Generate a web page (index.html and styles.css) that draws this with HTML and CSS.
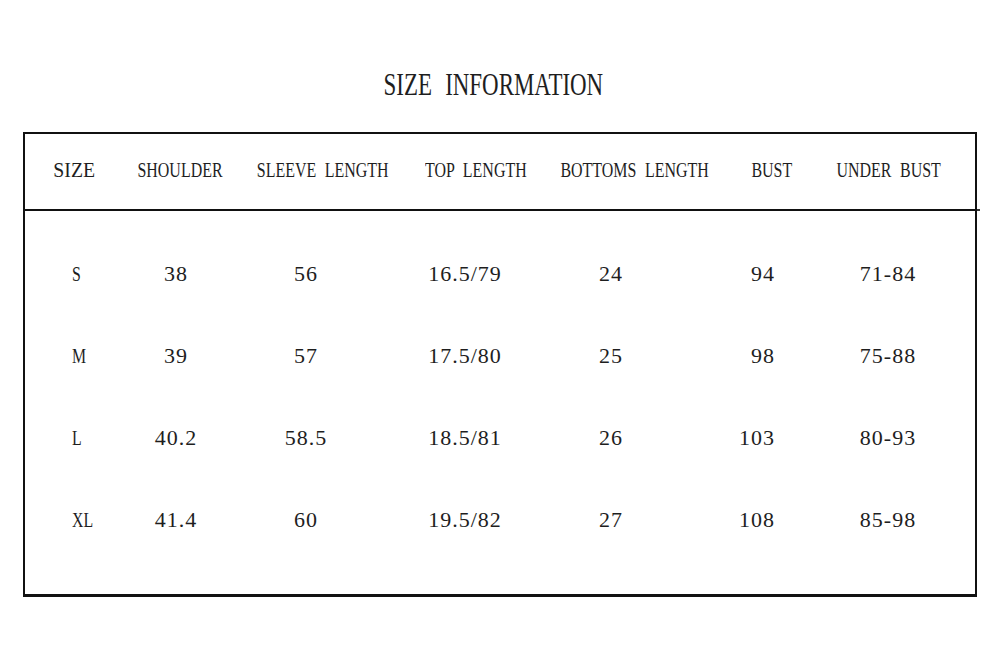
FILE: index.html
```html
<!DOCTYPE html>
<html lang="en">
<head>
<meta charset="utf-8">
<title>Size Information</title>
<link rel="stylesheet" href="styles.css">
</head>
<body>
<main class="sheet">
  <h1 class="title"><span class="squeeze">SIZE INFORMATION</span></h1>
  <section class="chart">
    <div class="head">
      <div class="hcell"><span class="squeeze loose">SIZE</span></div>
      <div class="hcell"><span class="squeeze">SHOULDER</span></div>
      <div class="hcell"><span class="squeeze">SLEEVE LENGTH</span></div>
      <div class="hcell"><span class="squeeze">TOP LENGTH</span></div>
      <div class="hcell"><span class="squeeze">BOTTOMS LENGTH</span></div>
      <div class="hcell"><span class="squeeze">BUST</span></div>
      <div class="hcell"><span class="squeeze">UNDER BUST</span></div>
    </div>
    <div class="body">
      <div class="row">
        <div class="cell size"><span class="letter">S</span></div>
        <div class="cell">38</div>
        <div class="cell">56</div>
        <div class="cell">16.5/79</div>
        <div class="cell">24</div>
        <div class="cell bust">94</div>
        <div class="cell">71-84</div>
      </div>
      <div class="row">
        <div class="cell size"><span class="letter">M</span></div>
        <div class="cell">39</div>
        <div class="cell">57</div>
        <div class="cell">17.5/80</div>
        <div class="cell">25</div>
        <div class="cell bust">98</div>
        <div class="cell">75-88</div>
      </div>
      <div class="row">
        <div class="cell size"><span class="letter">L</span></div>
        <div class="cell">40.2</div>
        <div class="cell">58.5</div>
        <div class="cell">18.5/81</div>
        <div class="cell">26</div>
        <div class="cell bust">103</div>
        <div class="cell">80-93</div>
      </div>
      <div class="row">
        <div class="cell size"><span class="letter">XL</span></div>
        <div class="cell">41.4</div>
        <div class="cell">60</div>
        <div class="cell">19.5/82</div>
        <div class="cell">27</div>
        <div class="cell bust">108</div>
        <div class="cell">85-98</div>
      </div>
    </div>
  </section>
</main>
</body>
</html>
```

FILE: styles.css
```css
html, body {
  margin: 0;
  padding: 0;
  background: #ffffff;
}

body {
  font-family: "Liberation Serif", "Times New Roman", serif;
  color: #1e1e1e;
}

.sheet {
  padding: 68px 0 0 23px;
  width: 954px;
}

.title {
  margin: 0;
  padding-right: 14px;
  font-size: 31px;
  font-weight: normal;
  line-height: 34px;
  text-align: center;
}

.title .squeeze {
  word-spacing: 10px;
  transform: scaleX(0.74);
}

.squeeze {
  display: inline-block;
  white-space: nowrap;
  transform: scaleX(0.78);
  transform-origin: center center;
}

.hcell .squeeze {
  word-spacing: 6px;
  transform: scaleX(0.76);
}

.hcell .squeeze.loose {
  transform: scaleX(0.94);
}

.chart {
  margin-top: 30px;
  width: 950px;
  border: 2px solid #111;
  border-bottom-width: 3px;
}

.head {
  display: grid;
  grid-template-columns: 98px 114px 172px 134px 184px 90px 144px;
  height: 75px;
  border-bottom: 2px solid #111;
  position: relative;
}

.head::after {
  content: "";
  position: absolute;
  right: -5px;
  bottom: -2px;
  width: 3px;
  height: 2px;
  background: #333;
}

.hcell {
  display: flex;
  align-items: center;
  justify-content: center;
  font-size: 21px;
  padding-bottom: 3px;
  white-space: nowrap;
}

.body {
  padding: 22px 0 33px;
}

.row {
  display: grid;
  grid-template-columns: 102px 98px 162px 156px 136px 136px 146px;
  height: 82px;
  align-items: center;
}

.cell {
  font-size: 22px;
  letter-spacing: 1px;
  text-align: center;
  white-space: nowrap;
}

.cell.size {
  text-align: left;
  padding-left: 47px;
}

.cell.bust {
  text-align: right;
  padding-right: 40px;
}

.letter {
  display: inline-block;
  transform: scaleX(0.72);
  transform-origin: left center;
  letter-spacing: 0;
}
```
